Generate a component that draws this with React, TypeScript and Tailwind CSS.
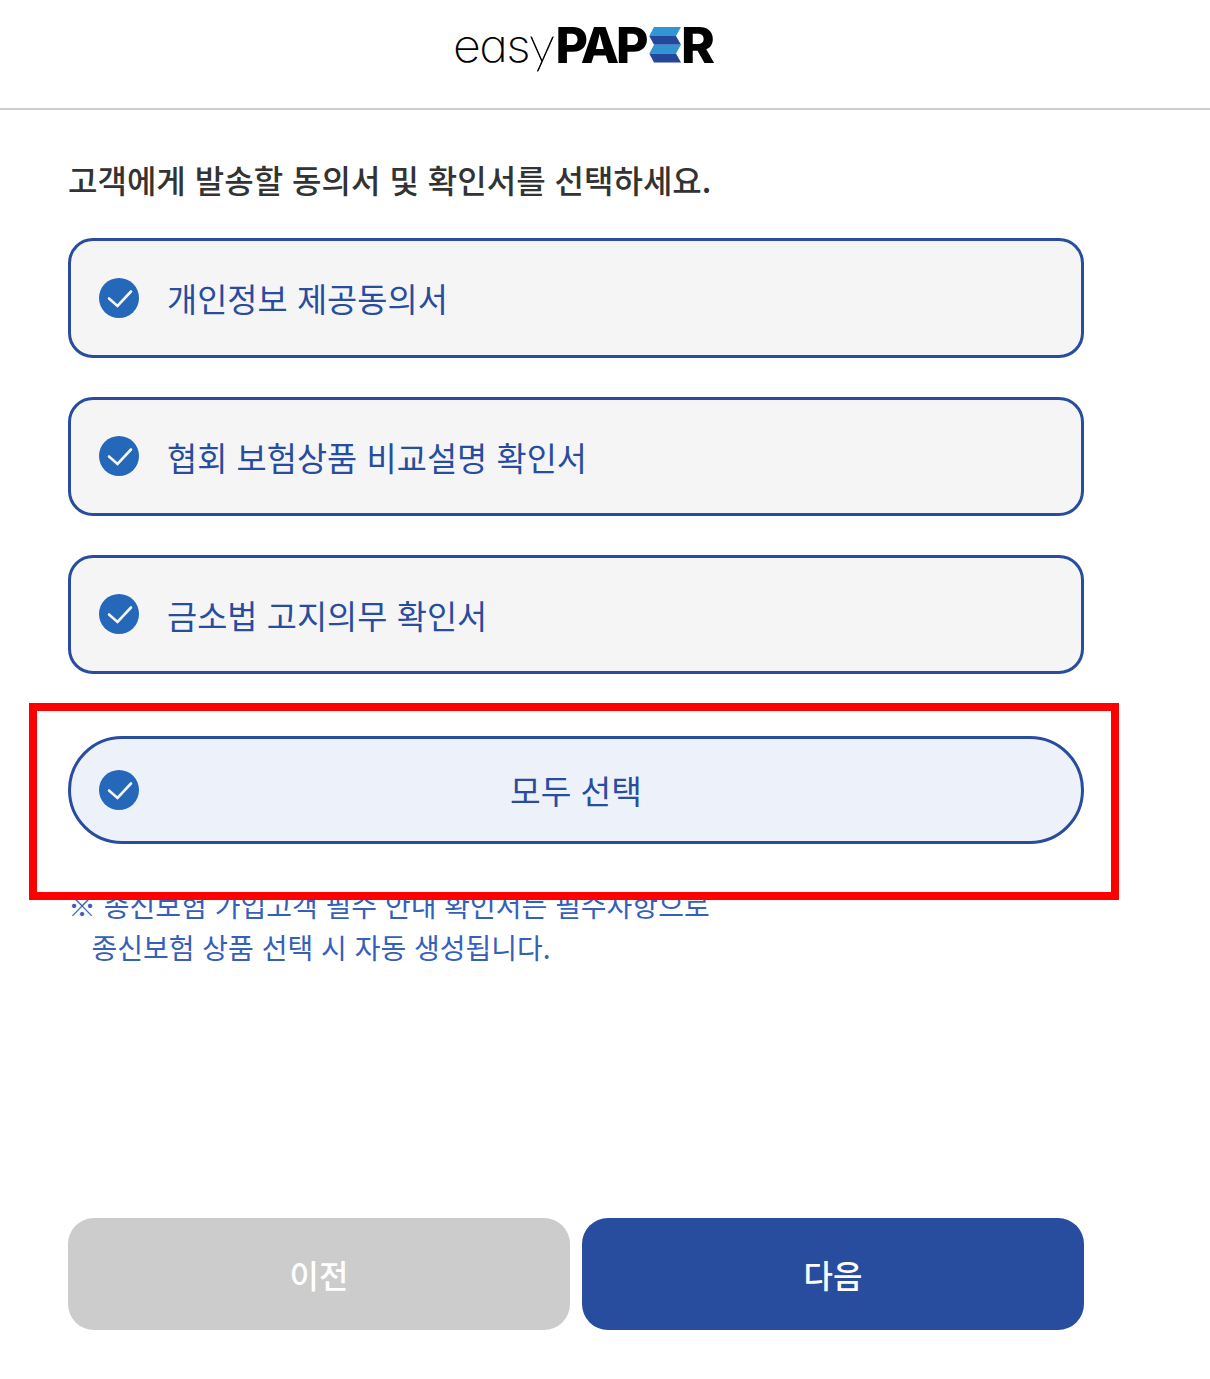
const documents = [
  { label: '개인정보 제공동의서', box: 'h-[120px] mb-[39px]', inner: '' },
  { label: '협회 보험상품 비교설명 확인서', box: 'h-[119px] mb-[39px]', inner: 'mb-px' },
  { label: '금소법 고지의무 확인서', box: 'h-[119px] mb-[62px]', inner: 'mb-px' },
];

function Logo() {
  return (
    <svg width="280" height="80" viewBox="445 7 280 80" className="block" aria-label="easyPAPER">
      <text
        x="453"
        y="62"
        fontFamily="Inter, sans-serif"
        fontSize="45"
        fontWeight="200"
        letterSpacing="-1.5"
        textLength="76"
        lengthAdjust="spacingAndGlyphs"
        style={{ fontFeatureSettings: "'cv11'" }}
      >
        eas
      </text>
      <text
        x="529.5"
        y="62"
        fontFamily="Lato, sans-serif"
        fontSize="50"
        fontWeight="100"
        stroke="#000"
        strokeWidth="0.8"
        textLength="25"
        lengthAdjust="spacingAndGlyphs"
      >
        y
      </text>
      <g fontFamily="Inter, sans-serif" fontSize="49" fontWeight="800">
        <text x="555.5" y="62.5" letterSpacing="-3" textLength="90" lengthAdjust="spacingAndGlyphs">PAP</text>
        <text x="681" y="62.5" textLength="34" lengthAdjust="spacingAndGlyphs">R</text>
      </g>
      <path d="M654 27H681L676 36H649.3Z" fill="#3096d3" />
      <path d="M649.3 36H676L681 44.7H654Z" fill="#24469b" />
      <path d="M654 44.7H681L676 53.5H649.3Z" fill="#3096d3" />
      <path d="M649.3 53.5H676L681 62.5H654Z" fill="#24469b" />
    </svg>
  );
}

function CheckMark({ className = '' }: { className?: string }) {
  return (
    <svg width="40" height="40" viewBox="0 0 40 40" className={`block shrink-0 ${className}`}>
      <circle cx="20" cy="20" r="20" fill="#2567b9" />
      <path d="M10 20.5L18.5 28L32 13.5" fill="none" stroke="#f5f5f5" strokeWidth="2.6" strokeLinecap="round" />
    </svg>
  );
}

export default function App() {
  return (
    <div className="h-[1379px] w-[1210px] overflow-hidden bg-white font-['Noto_Sans_CJK_KR',sans-serif]">
      <header className="h-[110px] border-b-2 border-[#cccccc] pl-[445px] pt-[7px]">
        <Logo />
      </header>
      <main className="ml-[68px] w-[1016px]">
        <h1 className="mb-[35px] whitespace-nowrap pt-[45px] text-[32px] font-medium leading-[48px] text-[#333333] [word-spacing:1.8px]">
          고객에게 발송할 동의서 및 확인서를 선택하세요.
        </h1>
        {documents.map((d) => (
          <div
            key={d.label}
            className={`flex items-center rounded-[25px] border-[3px] border-[#284d9f] bg-[#f5f5f5] pl-7 ${d.box}`}
          >
            <CheckMark className={d.inner} />
            <span className="ml-7 text-[32.8px] leading-[48px] text-[#284d9f] [word-spacing:1.9px]">{d.label}</span>
          </div>
        ))}
        <div className="relative flex h-[108px] items-center rounded-full border-[3px] border-[#284d9f] bg-[#edf2fa] pl-7">
          <CheckMark />
          <span className="flex-1 pr-[68px] text-center text-[33.4px] leading-[48px] text-[#284d9f] [word-spacing:1.7px]">
            모두 선택
          </span>
          <div className="absolute -left-[42px] -top-[36px] h-[197px] w-[1090px] border-8 border-[#ff0000]" />
        </div>
        <p className="mt-[40px] h-[334px] whitespace-nowrap text-[28px] leading-[42px] text-[#3560ba] [word-spacing:1.55px]">
          ※ 종신보험 가입고객 필수 안내 확인서는 필수사항으로
          <br />
          <span className="ml-[23.5px]">종신보험 상품 선택 시 자동 생성됩니다.</span>
        </p>
        <div className="grid h-28 grid-cols-2 gap-3 text-[32px] font-medium leading-[48px] text-white">
          <button className="rounded-[26px] bg-[#cccccc]">이전</button>
          <button className="rounded-[26px] bg-[#284d9f]">다음</button>
        </div>
      </main>
    </div>
  );
}
